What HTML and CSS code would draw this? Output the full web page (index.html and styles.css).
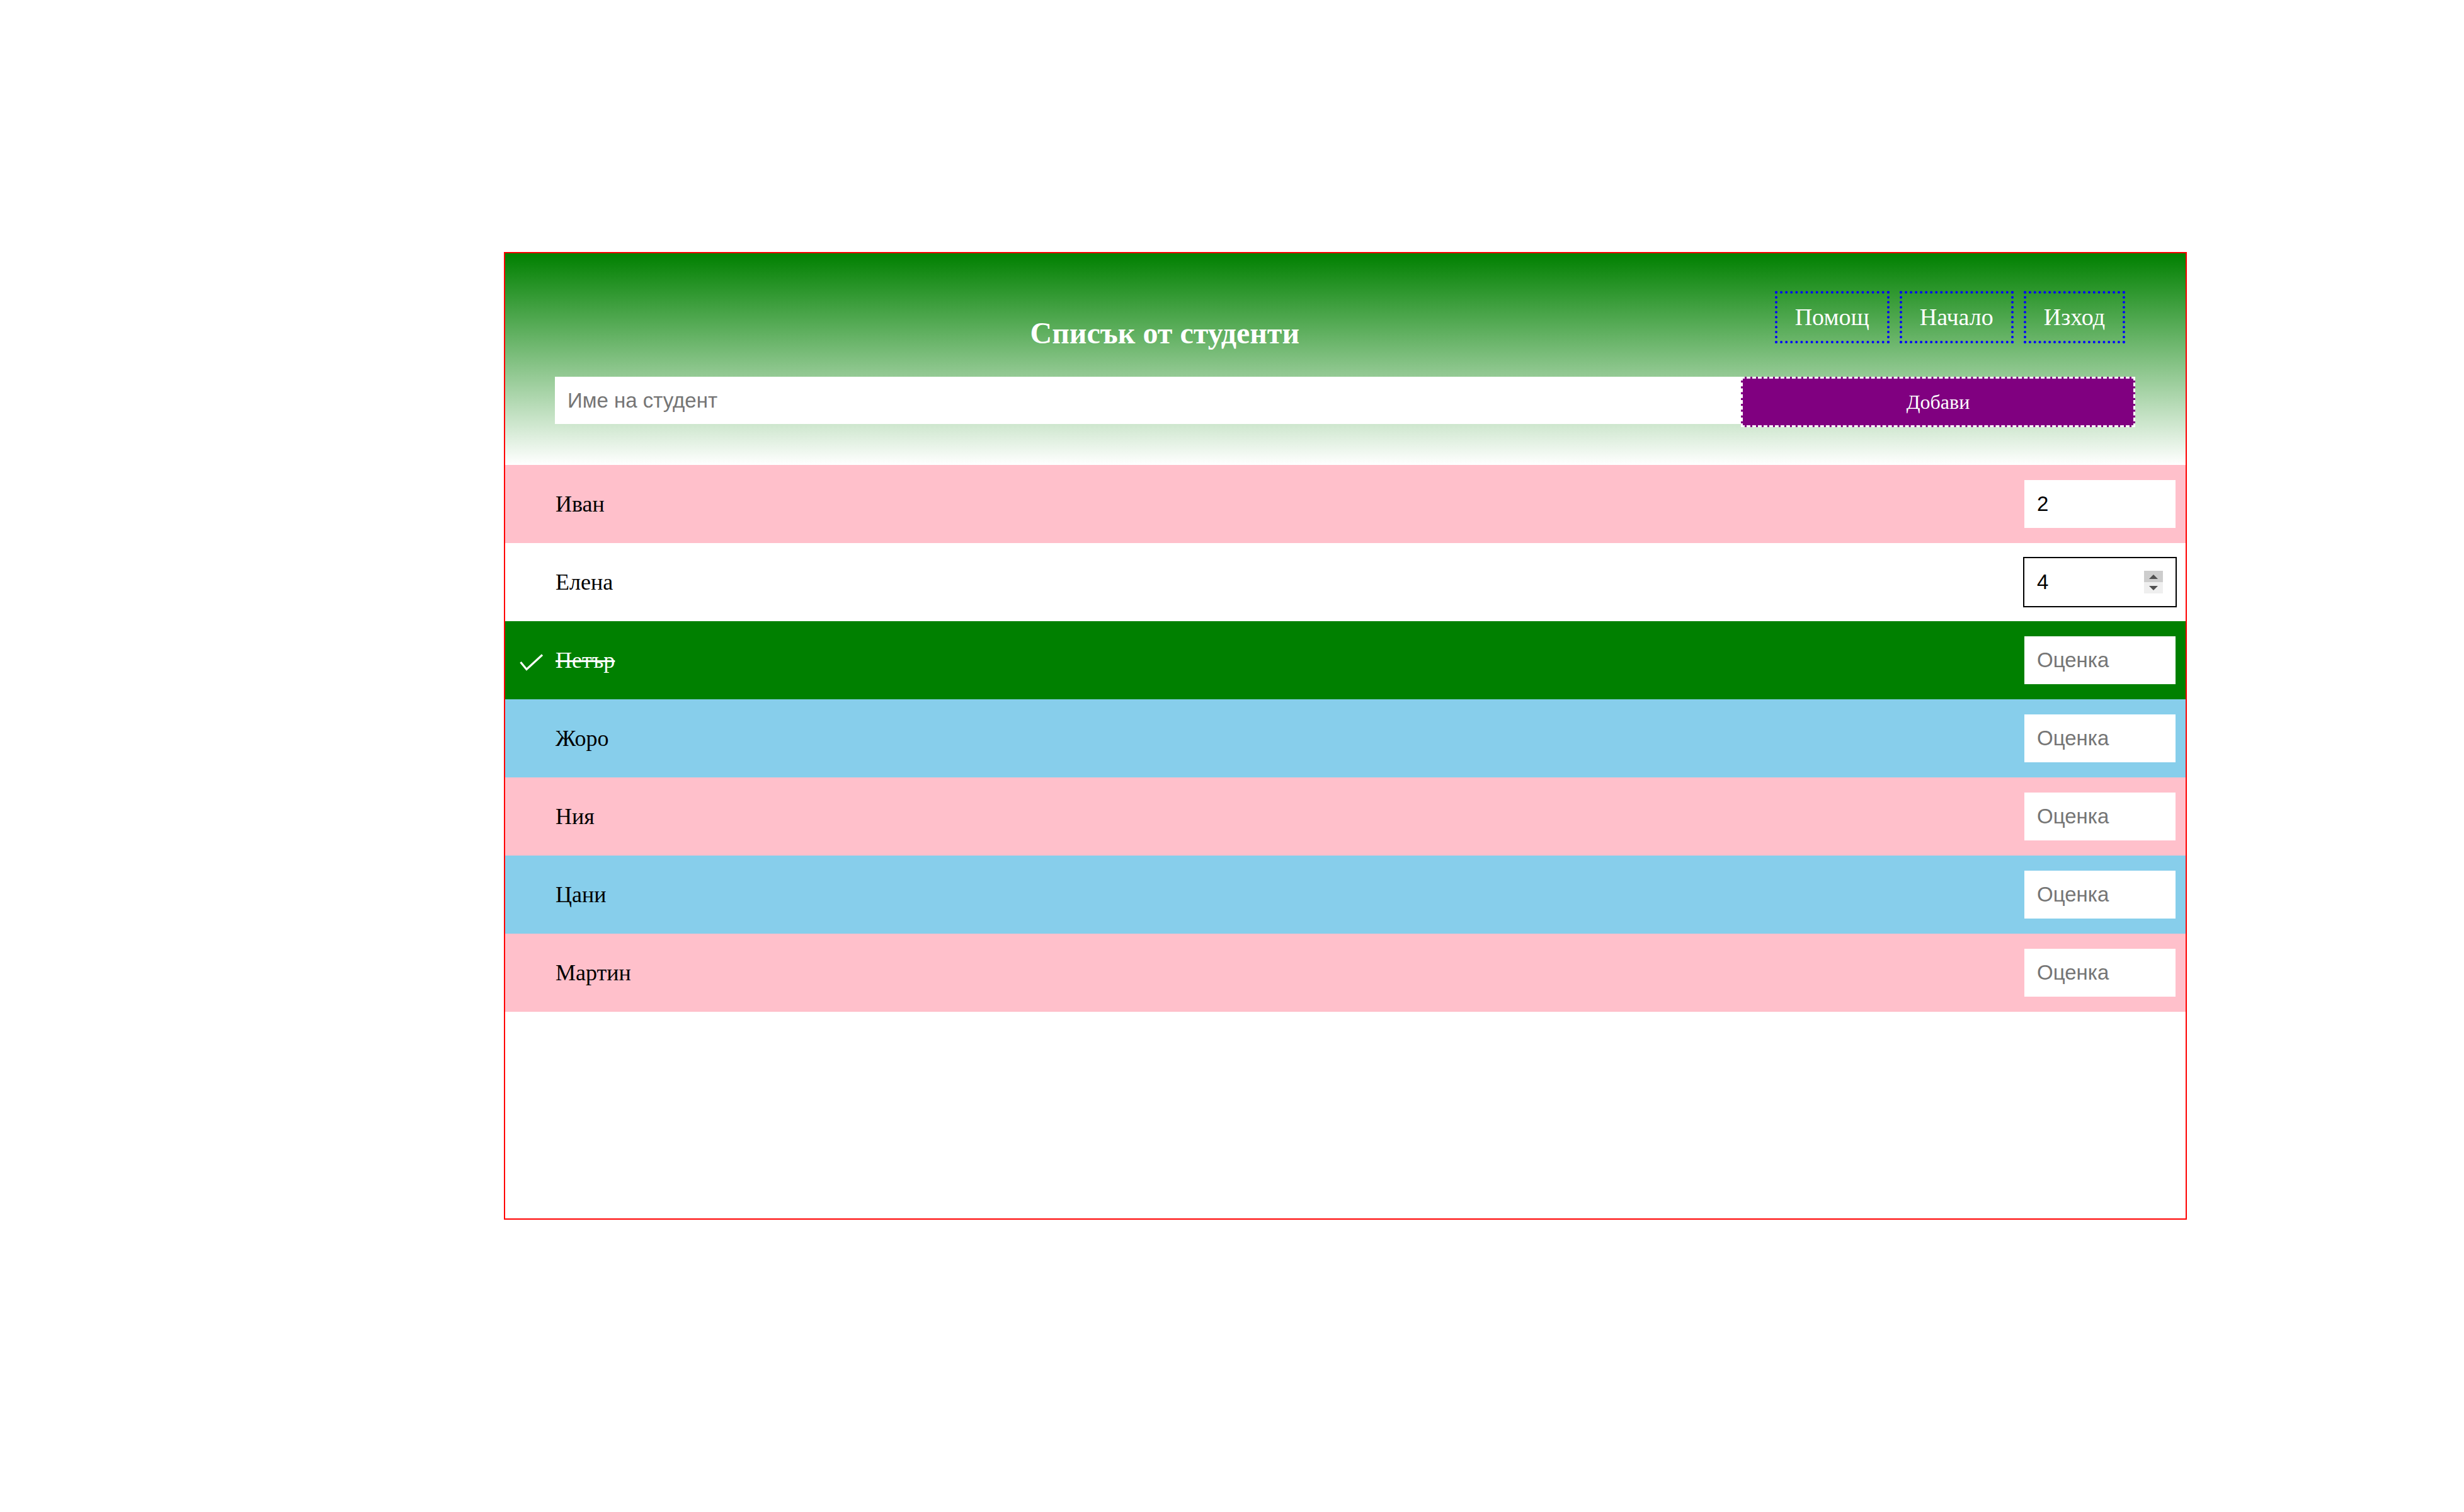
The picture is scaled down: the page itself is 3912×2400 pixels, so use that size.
FILE: index.html
```html
<!DOCTYPE html>
<html lang="bg">
<head>
<meta charset="utf-8">
<title>Списък от студенти</title>
<link rel="stylesheet" href="styles.css">
</head>
<body>
<div class="app">
  <header class="header">
    <div class="top">
      <h1 class="title">Списък от студенти</h1>
      <nav class="nav">
        <a class="nav-btn">Помощ</a>
        <a class="nav-btn">Начало</a>
        <a class="nav-btn">Изход</a>
      </nav>
    </div>
    <div class="add-row">
      <input class="name-input" type="text" placeholder="Име на студент">
      <button class="add-btn">Добави</button>
    </div>
  </header>
  <ul class="list">
    <li class="row pink"><span class="check"></span><span class="name">Иван</span><input class="grade" type="text" value="2" placeholder="Оценка"></li>
    <li class="row white"><span class="check"></span><span class="name">Елена</span><span class="grade-wrap"><input class="grade focused" type="text" value="4" placeholder="Оценка"><span class="spinner"><span class="spin-up"></span><span class="spin-down"></span></span></span></li>
    <li class="row green done"><span class="check"><svg width="37" height="27" viewBox="0 0 37 27"><polyline points="1.5,13 11,24.5 36,1.5" fill="none" stroke="#fff" stroke-width="3.2"/></svg></span><span class="name">Петър</span><input class="grade" type="text" placeholder="Оценка"></li>
    <li class="row blue"><span class="check"></span><span class="name">Жоро</span><input class="grade" type="text" placeholder="Оценка"></li>
    <li class="row pink"><span class="check"></span><span class="name">Ния</span><input class="grade" type="text" placeholder="Оценка"></li>
    <li class="row blue"><span class="check"></span><span class="name">Цани</span><input class="grade" type="text" placeholder="Оценка"></li>
    <li class="row pink"><span class="check"></span><span class="name">Мартин</span><input class="grade" type="text" placeholder="Оценка"></li>
  </ul>
</div>
</body>
</html>
```

FILE: styles.css
```css
html, body {
  margin: 0;
  padding: 0;
  background: #ffffff;
}

body {
  font-family: "Liberation Serif", "Times New Roman", serif;
}

.app {
  box-sizing: border-box;
  width: 2672px;
  height: 1536px;
  margin: 400px 0 0 800px;
  border: 2px solid #ff0000;
  background: #ffffff;
}

.header {
  background: linear-gradient(#008000, #ffffff);
  padding: 60px 80px 60px 79px;
}

.top {
  display: flex;
  align-items: flex-start;
  height: 136px;
}

.title {
  flex: 1;
  margin: 41px 0 0 0;
  text-align: center;
  color: #ffffff;
  font-size: 48px;
  font-weight: bold;
  line-height: 52px;
}

.nav {
  display: flex;
  gap: 16px;
  margin-right: 16px;
}

.nav-btn {
  display: block;
  box-sizing: border-box;
  height: 83px;
  line-height: 75px;
  padding: 0 28px;
  border: 4px dotted #0000ff;
  color: #ffffff;
  font-size: 38px;
  cursor: pointer;
}

.add-row {
  display: flex;
  align-items: flex-start;
}

.name-input {
  flex: 1;
  box-sizing: border-box;
  height: 75px;
  margin: 0;
  padding: 0 20px;
  border: none;
  outline: none;
  background: #ffffff;
  font-family: "Liberation Sans", Arial, sans-serif;
  font-size: 33px;
  color: #000;
}

.name-input::placeholder,
.grade::placeholder {
  color: #757575;
}

.add-btn {
  box-sizing: border-box;
  width: 626px;
  height: 80px;
  margin: 0;
  padding: 0;
  background: #800080;
  border: 3px dashed #ffffff;
  color: #ffffff;
  font-family: "Liberation Serif", "Times New Roman", serif;
  font-size: 32px;
}

.list {
  list-style: none;
  margin: 0;
  padding: 0;
}

.row {
  display: flex;
  align-items: center;
  height: 124px;
  padding: 0 16px 0 23px;
  font-size: 36px;
  color: #000000;
}

.pink { background: #ffc0cb; }
.white { background: #ffffff; }
.green { background: #008000; }
.blue { background: #87ceeb; }

.check {
  display: flex;
  width: 37px;
  height: 27px;
  margin-right: 20px;
  margin-top: 6px;
}

.name {
  flex: 1;
}

.done .name {
  color: #ffffff;
  text-decoration: line-through;
}

.grade {
  box-sizing: border-box;
  width: 240px;
  height: 76px;
  margin: 0;
  padding: 0 20px;
  border: none;
  outline: none;
  background: #ffffff;
  font-family: "Liberation Sans", Arial, sans-serif;
  font-size: 33px;
  color: #000000;
}

.grade-wrap {
  position: relative;
  display: flex;
}

.grade.focused {
  outline: 2px solid #000000;
}

.spinner {
  position: absolute;
  right: 20px;
  top: 20px;
  width: 30px;
  height: 36px;
  display: flex;
  flex-direction: column;
}

.spin-up,
.spin-down {
  flex: 1;
  display: flex;
  align-items: center;
  justify-content: center;
}

.spin-up {
  background: #cdcdcd;
}

.spin-down {
  background: #efefef;
}

.spin-up::before {
  content: "";
  border-left: 7px solid transparent;
  border-right: 7px solid transparent;
  border-bottom: 7px solid #505050;
}

.spin-down::before {
  content: "";
  border-left: 7px solid transparent;
  border-right: 7px solid transparent;
  border-top: 7px solid #505050;
}
```
